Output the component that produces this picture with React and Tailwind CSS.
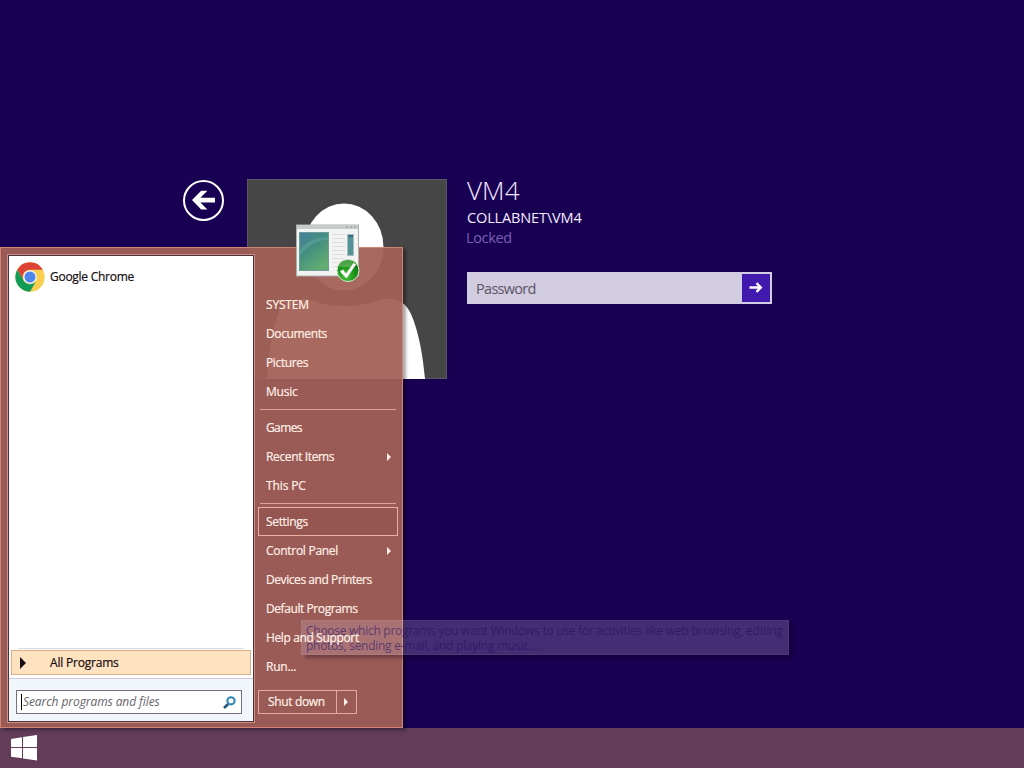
import React from 'react';
import clsx from 'clsx';

const UI_FONT = "font-['Open_Sans','Noto_Sans',sans-serif]";

const MENU_GROUPS = [
  [
    { label: 'SYSTEM', tracking: 'tracking-[-0.2px]' },
    { label: 'Documents', tracking: 'tracking-[-0.37px]' },
    { label: 'Pictures', tracking: 'tracking-[-0.37px]' },
    { label: 'Music', tracking: 'tracking-[-0.2px]' },
  ],
  [
    { label: 'Games', tracking: 'tracking-[-0.6px]' },
    { label: 'Recent Items', tracking: 'tracking-[-0.37px]', submenu: true },
    { label: 'This PC', tracking: 'tracking-[-0.12px]' },
  ],
  [
    { label: 'Settings', tracking: 'tracking-[-0.34px]', active: true },
    { label: 'Control Panel', tracking: 'tracking-[-0.28px]', submenu: true },
    { label: 'Devices and Printers', tracking: 'tracking-[-0.43px]' },
    { label: 'Default Programs', tracking: 'tracking-[-0.42px]' },
    { label: 'Help and Support', tracking: 'tracking-[-0.36px]' },
    { label: 'Run...', tracking: 'tracking-[-0.25px]' },
  ],
];

const Triangle = ({ className }) => (
  <svg viewBox="0 0 4 8" className={className} fill="currentColor">
    <path d="M0 0L4 4L0 8Z" />
  </svg>
);

const BackButton = () => (
  <svg width="42" height="42" viewBox="0 0 42 42" className="mt-px shrink-0">
    <circle cx="20.5" cy="20.5" r="19.5" fill="none" stroke="#fff" strokeWidth="2" />
    <path d="M9 20L18.2 10.8H24.4L17.4 17.7H32V22.6H17.4L24.4 29.5H18.2Z" fill="#fff" />
  </svg>
);

const UserTile = () => (
  <svg width="200" height="200" viewBox="0 0 200 200" className="shrink-0">
    <rect width="200" height="200" fill="#464646" />
    <rect x=".5" y=".5" width="199" height="199" fill="none" stroke="#5b5864" />
    <path
      d="M20 200C21 178 25 152 31 135C35 124 44 121 58 120C68 122 78 127 97 127C117 127 125 123 137 120C149 119 158 122 164 135C172 153 176 178 178 200Z"
      fill="#fff"
    />
    <ellipse cx="97" cy="69" rx="50" ry="58" fill="#464646" />
    <ellipse cx="97" cy="68" rx="39.5" ry="43.5" fill="#fff" />
  </svg>
);

const ChromeLogo = () => (
  <svg width="30" height="30" viewBox="0 0 48 48" className="shrink-0">
    <circle cx="24" cy="24" r="23.5" fill="#f9cf52" />
    <path d="M3.6 12.3A23.5 23.5 0 0 1 44.4 12.3H24A11.7 11.7 0 0 0 13.9 29.9Z" fill="#db4437" />
    <path d="M3.6 12.3A23.5 23.5 0 0 0 24 47.5L34.1 29.9A11.7 11.7 0 0 1 13.9 29.9Z" fill="#119d58" />
    <circle cx="24" cy="24" r="11" fill="#f4f4f4" />
    <circle cx="24" cy="24" r="8.8" fill="#4c86ee" />
  </svg>
);

const ProgramIcon = () => (
  <svg width="66" height="60" viewBox="0 0 66 60" className="absolute left-[294px] top-[-24px]">
    <defs>
      <linearGradient id="screen" x1="0" y1="0" x2="0.6" y2="1">
        <stop offset="0" stopColor="#467f9b" />
        <stop offset="0.5" stopColor="#45907f" />
        <stop offset="1" stopColor="#62ad70" />
      </linearGradient>
      <radialGradient id="badge" cx="0.4" cy="0.75" r="0.7">
        <stop offset="0" stopColor="#4cc33a" />
        <stop offset="0.55" stopColor="#1f981e" />
        <stop offset="1" stopColor="#0b7614" />
      </radialGradient>
    </defs>
    <rect x="1.5" y="1" width="62" height="51" fill="#f2f3f2" stroke="#a9b0ae" />
    <rect x="2" y="1" width="61" height="4" fill="#c7ccca" />
    <path d="M51 3H53M55 3H57M59 3H61" stroke="#8f9694" />
    <rect x="4.5" y="8.5" width="29" height="38" fill="url(#screen)" stroke="#6e9b98" />
    <path d="M5 26C13 16 23 13 33 13V16C22 16 13 21 5 31Z" fill="#8dd0cd" opacity=".2" />
    <path d="M37 10.5H50M37 14.5H50M37 18.5H50M37 22.5H50M37 26.5H50M37 30.5H50M37 34.5H49M37 38.5H45M37 42.5H43" stroke="#dde0de" />
    <rect x="52.5" y="10.5" width="6" height="21" fill="#549297" stroke="#a5bdbd" />
    <path d="M53 11H58V13H53Z" fill="#3d6d82" />
    <circle cx="53" cy="46.5" r="11" fill="url(#badge)" stroke="#d3edca" />
    <path d="M44 43C45.5 35 58.5 34 61.5 41C57.5 45 49.5 42 44 43Z" fill="#a4dc92" opacity=".4" />
    <path d="M45 47.5L48 45.5L51 49.5L58.5 39L61 40.5L51.5 54.5Z" fill="#fff" />
  </svg>
);

const SearchIcon = () => (
  <svg width="13" height="13" viewBox="0 0 13 13" fill="none">
    <path d="M1 12L5.2 8" stroke="#24557a" strokeWidth="2.6" />
    <circle cx="8" cy="4.8" r="3.6" stroke="#2c86b4" strokeWidth="2.1" />
  </svg>
);

const WindowsLogo = () => (
  <svg width="27" height="26" viewBox="0 0 27 26" fill="#fff">
    <path d="M0 3.9L11 2.3V12H0ZM12 2.1L26 0V12H12ZM0 13H11V23.3L0 21.8ZM12 13H26V25.5L12 23.5Z" />
  </svg>
);

const LockScreen = () => (
  <div className="flex pl-[183px] pt-[179px]">
    <BackButton />
    <div className="ml-[22px]">
      <UserTile />
    </div>
    <div className="ml-5 flex w-[305px] flex-col">
      <h1 className="h-[26px] whitespace-nowrap text-[26px] font-light leading-[22px] tracking-[0.1px] text-[#f3e9ff]">VM4</h1>
      <span className="h-[22px] whitespace-nowrap text-[14.5px] leading-[25px] tracking-[-0.13px] text-[#f6edff]">COLLABNET\VM4</span>
      <span className="-ml-px h-5 text-[14.5px] leading-[21px] tracking-[-0.35px] text-[#7860b4]">Locked</span>
      <div className="mt-[25px] flex h-8 items-center justify-between bg-[#d2cce0] pl-[9px] pr-0.5">
        <span className="pt-0.5 text-[14.5px] leading-8 tracking-[-0.7px] text-[#595564]">Password</span>
        <div className="flex h-7 w-7 items-center justify-center bg-[#4119ae]">
          <svg width="14" height="12" viewBox="0 0 14 12" fill="none" stroke="#fff" strokeWidth="2.4">
            <path d="M0.5 5.5H12M7.5 1.2L11.8 5.5L7.5 9.8" />
          </svg>
        </div>
      </div>
    </div>
  </div>
);

// Labels are lifted so that the fading tooltip passes underneath them
const MenuItem = ({ label, tracking, submenu, active }) => (
  <div
    className={clsx(
      'flex h-[29px] items-center justify-between border pl-[7px] pr-1.5',
      active ? 'border-[#eab0a5] bg-[#8e4e4a]/40' : 'border-transparent'
    )}
  >
    <span className={clsx('relative z-10 whitespace-nowrap', tracking)}>{label}</span>
    {submenu && <Triangle className="h-2 w-1" />}
  </div>
);

const ProgramsPane = () => (
  <div className="flex h-[467px] w-[246px] flex-col border border-[#4b3439] bg-white text-[#160d13] outline outline-[#cc8f83]">
    <div className="flex h-[42px] items-center gap-[5px] pl-1.5">
      <ChromeLogo />
      <span className="text-[12px] tracking-[-0.27px] [-webkit-text-stroke:0.2px]">Google Chrome</span>
    </div>
    <div className="mx-[9px] flex-1 border-b border-[#ddd8de]" />
    <div className="mx-0.5 mt-px flex h-[25px] items-center border border-[#d9ae88] bg-[#ffe3c1] pl-2">
      <Triangle className="h-3 w-1.5" />
      <span className="ml-6 text-[12px] tracking-[-0.2px] [-webkit-text-stroke:0.2px]">All Programs</span>
    </div>
    <div className="mt-[3px] h-[43px] border-t border-[#cfcbdc] bg-[#f1f5fc] px-[7px] pt-[11px]">
      <div className="flex h-6 w-[226px] items-center border border-[#75717f] bg-white pl-1 pr-[5px]">
        <div className="h-4 w-px bg-black" />
        <span className="ml-px flex-1 whitespace-nowrap text-[12px] italic tracking-[-0.08px] text-[#68646c]">Search programs and files</span>
        <SearchIcon />
      </div>
    </div>
  </div>
);

const StartMenu = () => (
  <div className="absolute left-0 top-[247px] flex h-[481px] w-[403px] border border-[#d18476] bg-[rgba(163,96,86,0.94)] pl-[7px] pt-[7px] shadow-[3px_2px_3px_rgba(0,0,0,0.35)]">
    <ProgramsPane />
    <div className="ml-1 flex w-[140px] flex-col pt-[35px] text-[12px] leading-none text-[#fff0e6] [-webkit-text-stroke:0.2px]">
      {MENU_GROUPS.map((group, i) => (
        <React.Fragment key={i}>
          {i > 0 && <div className="mx-0.5 my-[3px] h-px shrink-0 bg-[#dca297]" />}
          {group.map(item => (
            <MenuItem key={item.label} {...item} />
          ))}
        </React.Fragment>
      ))}
      <div className="mt-[9px] flex h-6 w-[99px] border border-[#e6aa9d]">
        <div className="flex w-[78px] items-center border-r border-[#e6aa9d] pl-[9px]">
          <span className="whitespace-nowrap tracking-[-0.35px]">Shut down</span>
        </div>
        <div className="flex flex-1 items-center justify-center pr-px">
          <Triangle className="h-2 w-1" />
        </div>
      </div>
    </div>
    <ProgramIcon />
  </div>
);

// Tooltip caught half way through its fade, so the menu shows through it
const FadingTooltip = () => (
  <div className="absolute left-[301px] top-[620px] h-[35px] w-[488px] whitespace-nowrap border border-white/5 bg-[rgba(225,205,230,0.22)] pl-1 pt-[2px] text-[12px] leading-[15px] text-[#240e62]/60 shadow-[4px_3px_3px_rgba(20,0,20,0.3)]">
    <div className="tracking-[-0.27px]">Choose which programs you want Windows to use for activities like web browsing, editing</div>
    <div className="tracking-[-0.27px]">photos, sending e-mail, and playing music...</div>
  </div>
);

const Taskbar = () => (
  <div className="flex h-10 items-center bg-[#623c58] pl-[11px]">
    <WindowsLogo />
  </div>
);

export default function App() {
  return (
    <div className={clsx('relative flex h-[768px] w-[1024px] flex-col overflow-hidden bg-[#180052]', UI_FONT)}>
      <div className="flex-1">
        <LockScreen />
      </div>
      <Taskbar />
      <StartMenu />
      <FadingTooltip />
    </div>
  );
}
